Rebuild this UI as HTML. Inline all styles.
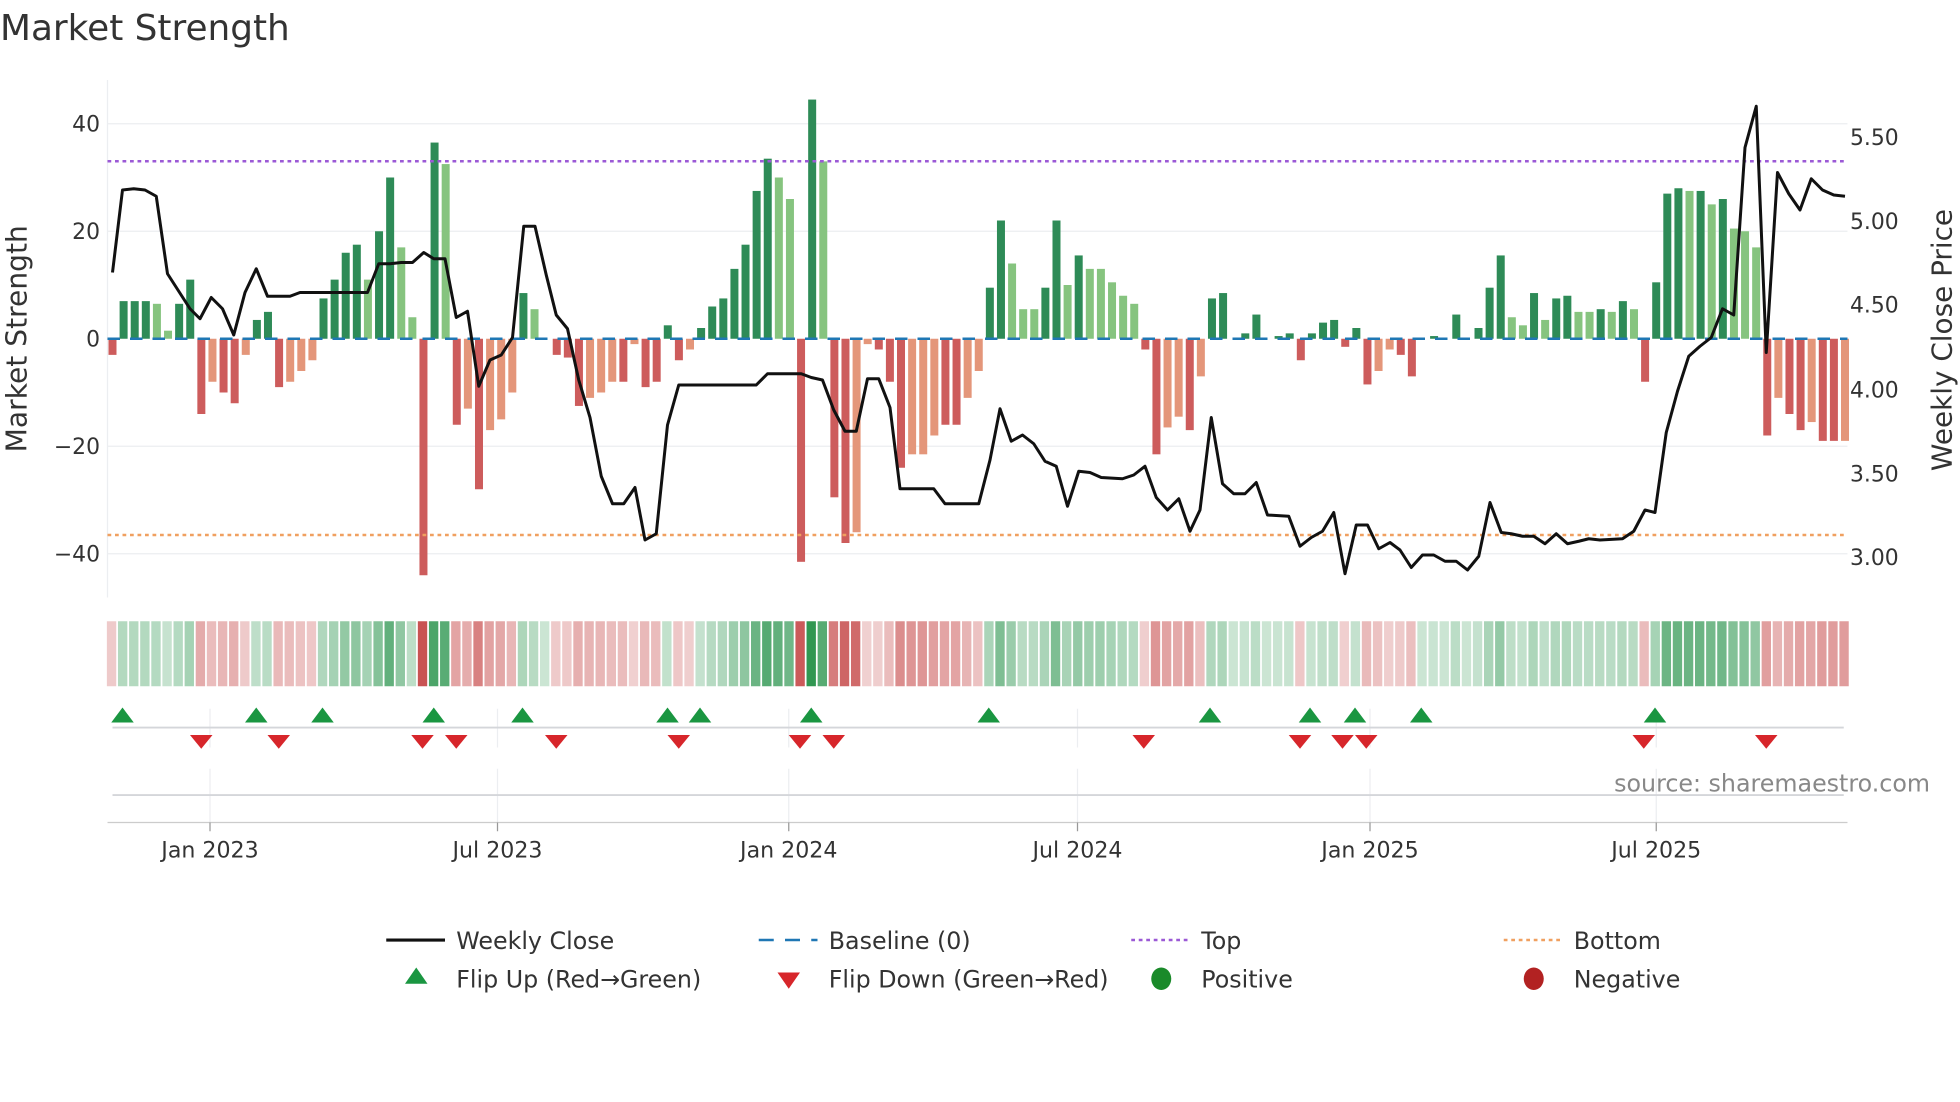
<!DOCTYPE html>
<html><head><meta charset="utf-8"><style>
html,body{margin:0;padding:0;background:#fff;width:1960px;height:1102px;overflow:hidden}
svg{display:block;font-family:"DejaVu Sans","Liberation Sans",sans-serif}
</style></head><body>
<svg id="s" width="1960" height="1102" viewBox="0 0 1568 881.6" xmlns="http://www.w3.org/2000/svg">
<rect width="1568" height="882" fill="#fff"/>
<text x="0" y="32" font-size="28.7" fill="#333">Market Strength</text>
<g stroke="#eceef1" stroke-width="1">
<line x1="86" x2="1478" y1="99" y2="99"/><line x1="86" x2="1478" y1="185" y2="185"/>
<line x1="86" x2="1478" y1="357" y2="357"/><line x1="86" x2="1478" y1="443" y2="443"/>
</g>
<line x1="86" x2="86" y1="64" y2="478" stroke="#eceef1"/>
<g font-size="17.5" fill="#333" text-anchor="end">
<text x="80" y="105">40</text><text x="80" y="191">20</text><text x="80" y="277">0</text>
<text x="80" y="363">−20</text><text x="80" y="449">−40</text>
</g>
<g font-size="17.5" fill="#333">
<text x="1480" y="116">5.50</text><text x="1480" y="183">5.00</text><text x="1480" y="250">4.50</text>
<text x="1480" y="318">4.00</text><text x="1480" y="385">3.50</text><text x="1480" y="452">3.00</text>
</g>
<text transform="translate(21,271) rotate(-90)" font-size="22.5" fill="#333" text-anchor="middle">Market Strength</text>
<text transform="translate(1561,272) rotate(-90)" font-size="22.3" fill="#333" text-anchor="middle">Weekly Close Price</text>
<g id="bars"></g>
<line x1="86" x2="1478" y1="271" y2="271" stroke="#1f77b4" stroke-width="2" stroke-dasharray="10,8"/>
<line x1="86" x2="1478" y1="129" y2="129" stroke="#9b59d6" stroke-width="2" stroke-dasharray="3,3"/>
<line x1="86" x2="1478" y1="428" y2="428" stroke="#f0a060" stroke-width="2" stroke-dasharray="3,3"/>
<polyline id="line" fill="none" stroke="#111" stroke-width="2.4" stroke-linejoin="round"/>
<g id="strip"></g>
<g id="grid2" stroke="#eceef1"></g>
<line x1="90" x2="1475" y1="582" y2="582" stroke="#d4d6da" stroke-width="1.5"/>
<line x1="90" x2="1475" y1="636" y2="636" stroke="#d4d6da" stroke-width="1.5"/>
<line x1="86" x2="1478" y1="658" y2="658" stroke="#ccc"/>
<g id="marks"></g>
<text x="1544" y="633" font-size="19" fill="#888" text-anchor="end">source: sharemaestro.com</text>
<g font-size="17.7" fill="#333" text-anchor="middle">
<text x="168" y="686">Jan 2023</text><text x="398" y="686">Jul 2023</text><text x="631" y="686">Jan 2024</text>
<text x="862" y="686">Jul 2024</text><text x="1096" y="686">Jan 2025</text><text x="1325" y="686">Jul 2025</text>
</g>
<g font-size="19" fill="#333">
<line x1="309" x2="356" y1="752" y2="752" stroke="#111" stroke-width="2.5"/><text x="365" y="759">Weekly Close</text>
<line x1="607" x2="654" y1="752" y2="752" stroke="#1f77b4" stroke-width="2" stroke-dasharray="12,9"/><text x="663" y="759">Baseline (0)</text>
<line x1="905" x2="950" y1="752" y2="752" stroke="#9b59d6" stroke-width="2" stroke-dasharray="3,3"/><text x="961" y="759">Top</text>
<line x1="1203" x2="1248" y1="752" y2="752" stroke="#f0a060" stroke-width="2" stroke-dasharray="3,3"/><text x="1259" y="759">Bottom</text>
<path d="M333 774 L342 787 L324 787Z" fill="#1a9641"/><text x="365" y="790">Flip Up (Red→Green)</text>
<path d="M622 778 L640 778 L631 791Z" fill="#d7262b"/><text x="663" y="790">Flip Down (Green→Red)</text>
<ellipse cx="929" cy="783" rx="8" ry="9" fill="#1a8a2a"/><text x="961" y="790">Positive</text>
<ellipse cx="1227" cy="783" rx="8" ry="9" fill="#b22222"/><text x="1259" y="790">Negative</text>
</g>
</svg>
<script>
var ns="http://www.w3.org/2000/svg";
function el(p,t,a){var e=document.createElementNS(ns,t);for(var k in a)e.setAttribute(k,a[k]);p.appendChild(e);return e;}
var v=[[-3,0],[7,0],[7,0],[7,0],[6.5,1],[1.5,1],[6.5,0],[11,0],[-14,0],[-8,1],[-10,0],[-12,0],[-3,1],[3.5,0],[5,0],[-9,0],[-8,1],[-6,1],[-4,1],[7.5,0],[11,0],[16,0],[17.5,0],[11,1],[20,0],[30,0],[17,1],[4,1],[-44,0],[36.5,0],[32.5,1],[-16,0],[-13,1],[-28,0],[-17,1],[-15,1],[-10,1],[8.5,0],[5.5,1],[0,0],[-3,0],[-3.5,0],[-12.5,0],[-11,1],[-10,1],[-8,1],[-8,0],[-1,1],[-9,0],[-8,0],[2.5,0],[-4,0],[-2,1],[2,0],[6,0],[7.5,0],[13,0],[17.5,0],[27.5,0],[33.5,0],[30,1],[26,1],[-41.5,0],[44.5,0],[33,1],[-29.5,0],[-38,0],[-36,1],[-1,1],[-2,0],[-8,0],[-24,0],[-21.5,1],[-21.5,1],[-18,1],[-16,0],[-16,0],[-11,1],[-6,1],[9.5,0],[22,0],[14,1],[5.5,1],[5.5,1],[9.5,0],[22,0],[10,1],[15.5,0],[13,1],[13,1],[10.5,1],[8,1],[6.5,1],[-2,0],[-21.5,0],[-16.5,1],[-14.5,1],[-17,0],[-7,1],[7.5,0],[8.5,0],[0,0],[1,0],[4.5,0],[0,0],[0.5,0],[1,0],[-4,0],[1,0],[3,0],[3.5,0],[-1.5,0],[2,0],[-8.5,0],[-6,1],[-2,1],[-3,0],[-7,0],[0,0],[0.5,0],[0,0],[4.5,0],[0,0],[2,0],[9.5,0],[15.5,0],[4,1],[2.5,1],[8.5,0],[3.5,1],[7.5,0],[8,0],[5,1],[5,1],[5.5,0],[5,1],[7,0],[5.5,1],[-8,0],[10.5,0],[27,0],[28,0],[27.5,1],[27.5,0],[25,1],[26,0],[20.5,1],[20,1],[17,1],[-18,0],[-11,1],[-14,0],[-17,0],[-15.5,1],[-19,0],[-19,0],[-19,1]];
var n=v.length,x0=90,dx=(1476-90)/(n-1);
var B=document.getElementById('bars'),S=document.getElementById('strip');
v.forEach(function(d,i){var x=x0+i*dx,val=d[0],h=Math.abs(val)*4.3,c;
 if(val>=0)c=d[1]?'#86c47f':'#2e8b57';else c=d[1]?'#e4967a':'#cd5c5c';
 if(h>0.5)el(B,'rect',{x:x-3.2,y:val>=0?271-h:271,width:6.4,height:h,fill:c});
 var sc;
 if(val>=0){sc='rgba(46,150,80,'+(0.25+Math.abs(val)/60)+')';}else{sc='rgba(200,80,80,'+(0.25+Math.abs(val)/60)+')';}
 el(S,'rect',{x:x-4.5,y:497,width:dx-1.4,height:52,fill:sc});
});
var P=[[90,218],[98,152],[107,151],[116,152],[125,157],[134,219],[143,233],[152,247],[160,255],[169,238],[178,247],[187,268],[196,234],[205,215],[214,237],[223,237],[232,237],[240,234],[294,234],[303,211],[312,211],[321,210],[330,210],[339,202],[347,207],[356,207],[365,254],[374,249],[383,309],[392,288],[401,284],[410,270],[419,181],[428,181],[437,220],[445,252],[454,263],[463,304],[472,334],[481,381],[490,403],[499,403],[508,390],[516,432],[525,427],[534,340],[543,308],[605,308],[614,299],[641,299],[649,302],[658,304],[667,328],[676,345],[685,345],[694,303],[703,303],[712,326],[720,391],[747,391],[756,403],[783,403],[792,368],[800,327],[809,353],[818,348],[827,355],[836,369],[845,373],[854,405],[863,377],[872,378],[881,382],[898,383],[907,380],[916,373],[925,398],[934,408],[943,399],[952,425],[960,408],[969,334],[978,387],[987,395],[996,395],[1005,386],[1014,412],[1031,413],[1040,437],[1049,430],[1058,425],[1067,410],[1076,459],[1085,420],[1094,420],[1103,439],[1112,434],[1120,440],[1129,454],[1138,444],[1147,444],[1156,449],[1165,449],[1174,456],[1183,445],[1192,402],[1201,426],[1209,427],[1218,429],[1227,429],[1236,435],[1245,427],[1254,435],[1263,433],[1271,431],[1280,432],[1298,431],[1307,425],[1316,408],[1324,410],[1333,346],[1342,313],[1351,285],[1360,277],[1369,270],[1378,247],[1387,252],[1396,118],[1405,85],[1413,282],[1422,138],[1431,155],[1440,168],[1449,143],[1458,152],[1467,156],[1476,157]];
document.getElementById('line').setAttribute('points',P.map(function(p){return p.join(',')}).join(' '));
var G=document.getElementById('grid2');
[168,398,631,862,1096,1325].forEach(function(x){el(G,'line',{x1:x,x2:x,y1:567,y2:598});el(G,'line',{x1:x,x2:x,y1:615,y2:658});el(document.getElementById('s'),'line',{x1:x,x2:x,y1:658,y2:665,stroke:'#999'});});
var M=document.getElementById('marks');
[98,205,258,347,418,534,560,649,791,968,1048,1084,1137,1324].forEach(function(x){el(M,'path',{d:'M'+x+' 566 L'+(x+9)+' 578 L'+(x-9)+' 578Z',fill:'#1a9641'});});
[161,223,338,365,445,543,640,667,915,1040,1074,1093,1315,1413].forEach(function(x){el(M,'path',{d:'M'+(x-9)+' 588 L'+(x+9)+' 588 L'+x+' 599Z',fill:'#d7262b'});});
</script>
</body></html>
